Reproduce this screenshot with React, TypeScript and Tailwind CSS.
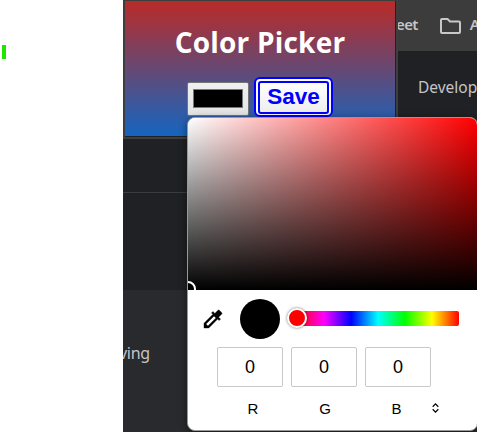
import React from 'react';

function PageBehind() {
  return (
    <div className="ml-[123px] flex h-[432px] w-[354px] flex-col overflow-hidden bg-[#202124] font-['Noto_Sans',sans-serif] text-[#c4c5c8]">
      <div className="flex h-[51px] items-center bg-[#3c3c3c] pl-[273px]">
        <span className="-mt-[3px] w-[22px] whitespace-nowrap text-[15px] font-semibold leading-5 tracking-[-0.6px]">eet</span>
        <svg className="ml-[22px] h-4 w-[21px] shrink-0" viewBox="0 0 21 16" fill="none" stroke="#c8c8c8" strokeWidth="2" strokeLinejoin="round">
          <path d="M1 2Q1 1 2 1H7.5L10 3.5H19Q20 3.5 20 4.5V14Q20 15 19 15H2Q1 15 1 14Z" />
        </svg>
        <span className="-mt-[3px] ml-[9px] text-[15px] font-semibold leading-5">A</span>
      </div>
      <div className="h-[142px] border-b border-[#3c3c3c] pl-[295px] pt-[24px]">
        <span className="whitespace-nowrap text-[15.5px] leading-5">Develop</span>
      </div>
      <div className="h-[97px]" />
      <div className="flex-1 bg-[#292a2d] pt-[51px]">
        <span className="-ml-[4px] whitespace-nowrap text-[16px] leading-5 tracking-[-0.3px]">ving</span>
      </div>
    </div>
  );
}

function ExtensionPopup() {
  return (
    <section className="absolute left-[123px] top-0 h-[139px] w-[275px] border-x-2 border-b-2 border-t border-[#3c3e3f] bg-[#202124] pb-px pr-px">
      <div className="flex h-[135px] w-[270px] flex-col items-center bg-[linear-gradient(to_bottom,#b92b27,#1565c0)]">
        <h1 className="mt-[21px] whitespace-nowrap font-['Open_Sans',sans-serif] text-[28px] font-bold leading-10 tracking-[0.2px] text-white">Color Picker</h1>
        <div className="mt-[15px] flex w-full items-start pl-[62px]">
          <div className="mt-[5px] h-[34px] w-[62px] rounded-[2px] border border-[#767676] bg-linear-to-b from-[#f0f0f0] to-[#e4e4e4] px-[5px] py-[6px]">
            <div className="h-[19px] w-[50px] border border-[#777] bg-black" />
          </div>
          <button className="ml-[5px] h-[40px] w-[79px] rounded-[6px] border-2 border-[#0000ff] bg-white p-[2px]">
            <span className="flex h-[33px] items-center justify-center rounded-[3px] border-2 border-[#0000ff] bg-linear-to-b from-white to-[#eeeeee] pb-px font-['Liberation_Sans',sans-serif] text-[22.5px] font-bold leading-6 text-[#0000ff]">Save</span>
          </button>
        </div>
      </div>
    </section>
  );
}

function Eyedropper() {
  return (
    <svg className="h-6 w-6" viewBox="0 0 24 24" stroke="#000" strokeWidth="0.4">
      <path d="M20.71 5.63l-2.34-2.34a1 1 0 0 0-1.41 0l-3.12 3.12-1.93-1.91-1.41 1.41 1.42 1.42L3 16.25V21h4.75l8.92-8.92 1.42 1.42 1.41-1.41-1.92-1.92 3.12-3.12a1 1 0 0 0 .01-1.42zM6.92 19L5 17.08l8.06-8.06 1.92 1.92L6.92 19z" />
    </svg>
  );
}

function ChannelField({ label, labelClass }: { label: string; labelClass: string }) {
  return (
    <label className="flex w-[66px] flex-col items-center">
      <span className="flex h-10 w-full items-center justify-center rounded-[2px] border border-[#c8c8c8] text-[18px]">0</span>
      <span className={`mt-[12px] text-[15px] leading-5 ${labelClass}`}>{label}</span>
    </label>
  );
}

function ColorPopup() {
  return (
    <section className="absolute left-[187px] top-[117px] h-[314px] w-[291px] overflow-hidden rounded-[8px] border border-[#999] bg-white font-['Liberation_Sans',sans-serif] text-black shadow-[0_2px_9px_rgba(0,0,0,0.45)]">
      <div className="relative h-[172px] overflow-hidden bg-[linear-gradient(to_top,#000,transparent),linear-gradient(to_right,#fff,#f00)]">
        <div className="absolute -left-[8px] top-[163px] h-4 w-4 rounded-full border-2 border-white bg-black" />
      </div>
      <div className="flex h-[57px] items-center pl-[13px]">
        <Eyedropper />
        <div className="ml-[15px] h-10 w-10 rounded-full bg-black" />
        <div className="relative ml-[17px] h-[15px] w-[162px] rounded-[2px] bg-[linear-gradient(to_right,#f00,#f0f_16.67%,#00f_33.33%,#0ff_50%,#0f0_66.67%,#ff0_83.33%,#f00)]">
          <div className="absolute -left-[10px] -top-[3px] h-5 w-5 rounded-full border-2 border-white bg-[#ff0000] shadow-[0_0_3px_rgba(0,0,0,0.55)]" />
        </div>
      </div>
      <div className="flex gap-2 pl-[29px]">
        <ChannelField label="R" labelClass="pl-[6px]" />
        <ChannelField label="G" labelClass="pl-[2px]" />
        <ChannelField label="B" labelClass="pr-[3px]" />
        <svg className="-ml-[7px] mt-[56px] h-[10px] w-[7px]" viewBox="0 0 7 10" fill="none" stroke="#000" strokeWidth="1.25">
          <path d="M.7 3.7L3.5.9L6.3 3.7M.7 6.3L3.5 9.1L6.3 6.3" />
        </svg>
      </div>
    </section>
  );
}

export default function App() {
  return (
    <main className="relative h-[432px] w-[477px] overflow-hidden bg-white">
      <div className="absolute left-[2px] top-[45px] h-[14px] w-1 bg-[#22e600]" />
      <PageBehind />
      <ExtensionPopup />
      <ColorPopup />
    </main>
  );
}
